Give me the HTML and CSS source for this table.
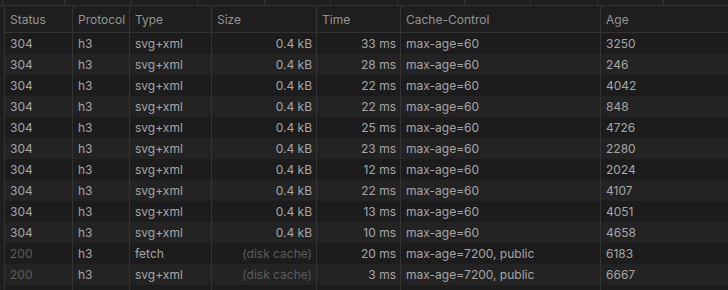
FILE: index.html
```html
<!DOCTYPE html>
<html>
<head>
<meta charset="utf-8">
<link rel="stylesheet" href="styles.css">
</head>
<body>
<div class="timeline"></div>
<div class="table">
  <div class="row head">
    <div class="c">Status</div><div class="c">Protocol</div><div class="c">Type</div><div class="c">Size</div><div class="c">Time</div><div class="c">Cache-Control</div><div class="c">Age</div>
  </div>
  <div class="row"><div class="c">304</div><div class="c">h3</div><div class="c">svg+xml</div><div class="c r">0.4 kB</div><div class="c r">33 ms</div><div class="c">max-age=60</div><div class="c">3250</div></div>
  <div class="row"><div class="c">304</div><div class="c">h3</div><div class="c">svg+xml</div><div class="c r">0.4 kB</div><div class="c r">28 ms</div><div class="c">max-age=60</div><div class="c">246</div></div>
  <div class="row"><div class="c">304</div><div class="c">h3</div><div class="c">svg+xml</div><div class="c r">0.4 kB</div><div class="c r">22 ms</div><div class="c">max-age=60</div><div class="c">4042</div></div>
  <div class="row"><div class="c">304</div><div class="c">h3</div><div class="c">svg+xml</div><div class="c r">0.4 kB</div><div class="c r">22 ms</div><div class="c">max-age=60</div><div class="c">848</div></div>
  <div class="row"><div class="c">304</div><div class="c">h3</div><div class="c">svg+xml</div><div class="c r">0.4 kB</div><div class="c r">25 ms</div><div class="c">max-age=60</div><div class="c">4726</div></div>
  <div class="row"><div class="c">304</div><div class="c">h3</div><div class="c">svg+xml</div><div class="c r">0.4 kB</div><div class="c r">23 ms</div><div class="c">max-age=60</div><div class="c">2280</div></div>
  <div class="row"><div class="c">304</div><div class="c">h3</div><div class="c">svg+xml</div><div class="c r">0.4 kB</div><div class="c r">12 ms</div><div class="c">max-age=60</div><div class="c">2024</div></div>
  <div class="row"><div class="c">304</div><div class="c">h3</div><div class="c">svg+xml</div><div class="c r">0.4 kB</div><div class="c r">22 ms</div><div class="c">max-age=60</div><div class="c">4107</div></div>
  <div class="row"><div class="c">304</div><div class="c">h3</div><div class="c">svg+xml</div><div class="c r">0.4 kB</div><div class="c r">13 ms</div><div class="c">max-age=60</div><div class="c">4051</div></div>
  <div class="row"><div class="c">304</div><div class="c">h3</div><div class="c">svg+xml</div><div class="c r">0.4 kB</div><div class="c r">10 ms</div><div class="c">max-age=60</div><div class="c">4658</div></div>
  <div class="row"><div class="c dim">200</div><div class="c">h3</div><div class="c">fetch</div><div class="c r dim">(disk cache)</div><div class="c r">20 ms</div><div class="c">max-age=7200, public</div><div class="c">6183</div></div>
  <div class="row"><div class="c dim">200</div><div class="c">h3</div><div class="c">svg+xml</div><div class="c r dim">(disk cache)</div><div class="c r">3 ms</div><div class="c">max-age=7200, public</div><div class="c">6667</div></div>
  <div class="row filler"><div class="c"></div><div class="c"></div><div class="c"></div><div class="c"></div><div class="c"></div><div class="c"></div><div class="c"></div></div>
</div>
</body>
</html>
```
FILE: styles.css
```css
html, body {
  margin: 0;
  padding: 0;
  background: #1e1e1e;
  overflow: hidden;
}
body {
  font-family: Inter, "Liberation Sans", sans-serif;
  font-size: 12px;
  color: #a6a6a6;
  width: 728px;
  height: 290px;
}
.timeline {
  height: 5px;
  border-bottom: 1px solid #333333;
  background-image: repeating-linear-gradient(90deg, #333333 0 1px, transparent 1px 66.6px);
  background-position: 64px 0;
  background-color: #1e1e1e;
}
.table {
  margin-left: 4px;
  border-left: 1px solid #333333;
}
.row {
  display: grid;
  grid-template-columns: 68px 57px 82px 105px 84px 200px 1fr;
  height: 21px;
  background: #1c1c1c;
}
.row:nth-child(odd) {
  background: #232323;
}
.row.head {
  height: 26px;
  background: #1e1e1e;
  border-bottom: 1px solid #333333;
  color: #949494;
}
.c {
  border-right: 1px solid #333333;
  padding: 0 4px 0 5px;
  display: flex;
  align-items: center;
  white-space: nowrap;
  overflow: hidden;
}
.c:last-child {
  border-right: none;
}
.c.r {
  justify-content: flex-end;
}
.dim {
  color: #5c5c5c;
}
.row.filler {
  height: 10px;
}
```
